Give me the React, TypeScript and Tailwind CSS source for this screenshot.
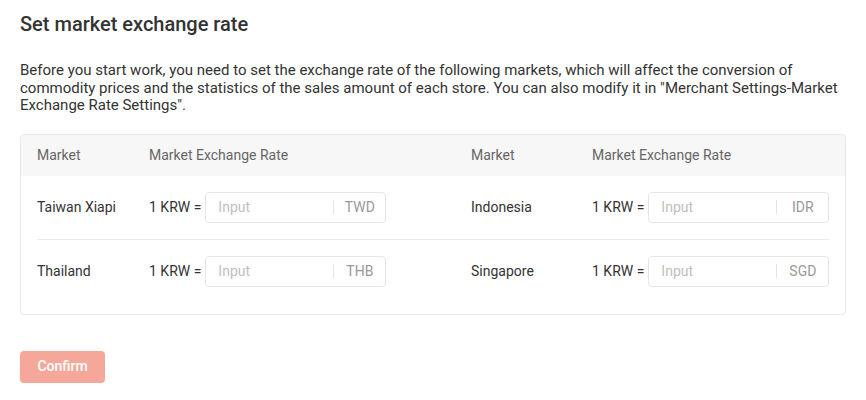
import React from "react";

const rows: [string, string, string, string][] = [
  ["Taiwan Xiapi", "TWD", "Indonesia", "IDR"],
  ["Thailand", "THB", "Singapore", "SGD"],
];

function RateInput({ suffix }: { suffix: string }) {
  return (
    <div className="flex items-center">
      <span className="text-[14px] text-[#333] mr-[4px] whitespace-nowrap">1 KRW =</span>
      <div className="flex items-center w-[181px] h-[31px] border border-[#e6e6e6] rounded-[4px] bg-white">
        <input
          placeholder="Input"
          className="flex-1 min-w-0 pl-[12px] text-[14px] text-[#333] placeholder:text-[#c0c0c0] outline-none bg-transparent"
        />
        <span className="w-px h-[14px] bg-[#e6e6e6]" />
        <span className="w-[51px] text-center text-[14px] text-[#999]">{suffix}</span>
      </div>
    </div>
  );
}

export default function App() {
  return (
    <div className="w-[866px] h-[400px] bg-white px-[20px] pt-[10px]" style={{ fontFamily: "Roboto, 'Noto Sans', sans-serif" }}>
      <h1 className="text-[20px] font-medium text-[#333] leading-[28px]">Set market exchange rate</h1>
      <p className="mt-[24px] text-[15px] leading-[17.5px] text-[#333]">
        Before you start work, you need to set the exchange rate of the following markets, which will affect the conversion of commodity prices and the statistics of the sales amount of each store. You can also modify it in "Merchant Settings-Market Exchange Rate Settings".
      </p>
      <div className="mt-[19px] w-[826px] border border-[#e8e8e8] rounded-[4px] pb-[11px]">
        <div className="grid grid-cols-[112px_322px_121px_1fr] h-[41px] items-center px-[16px] bg-[#f7f7f7] text-[14px] text-[#666] rounded-t-[4px]">
          <span>Market</span>
          <span>Market Exchange Rate</span>
          <span>Market</span>
          <span>Market Exchange Rate</span>
        </div>
        <div className="px-[16px]">
          {rows.map((r, i) => (
            <div
              key={i}
              className={`grid grid-cols-[112px_322px_121px_1fr] items-center py-[16px] text-[14px] text-[#333] ${i === 0 ? "border-b border-[#ebebeb]" : ""}`}
            >
              <span>{r[0]}</span>
              <RateInput suffix={r[1]} />
              <span>{r[2]}</span>
              <RateInput suffix={r[3]} />
            </div>
          ))}
        </div>
      </div>
      <button className="mt-[36px] w-[85px] h-[32px] rounded-[4px] bg-[#f5a899] text-white text-[14px] font-medium">
        Confirm
      </button>
    </div>
  );
}
